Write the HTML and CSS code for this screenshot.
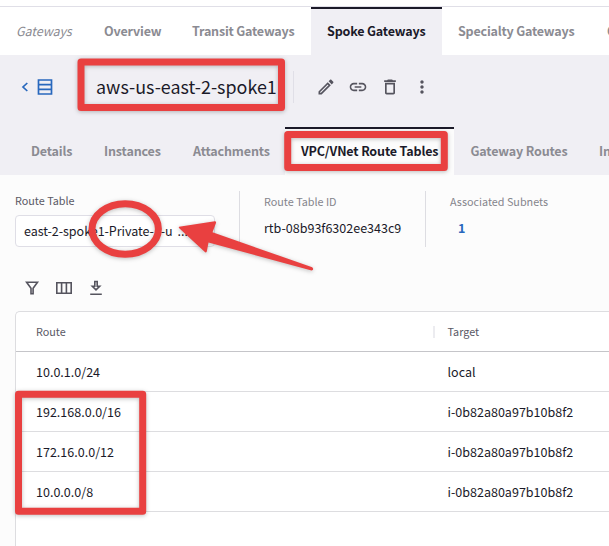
FILE: index.html
```html
<!DOCTYPE html>
<html lang="en">
<head>
<meta charset="utf-8">
<title>Spoke Gateways</title>
<link rel="stylesheet" href="styles.css">
</head>
<body>
<nav class="tabs main-tabs">
  <span class="tab section">Gateways</span>
  <a class="tab w88">Overview</a>
  <a class="tab w135">Transit Gateways</a>
  <a class="tab w131 active">Spoke Gateways</a>
  <a class="tab w149">Specialty Gateways</a>
  <a class="tab">C</a>
</nav>
<header class="title-bar">
  <svg class="back" viewBox="0 0 8 12"><path d="M6.300 2 2 6l4.300 4"/></svg>
  <svg class="list" viewBox="0 0 16 16"><path d="M1.500 1h13v14h-13zM1.500 5.700h13M1.500 10.300h13"/></svg>
  <h1>aws-us-east-2-spoke1</h1>
  <div class="actions">
    <svg viewBox="0 0 24 24"><path d="M14.060 9.020l.92.92L5.920 19H5v-.92l9.060-9.060M17.660 3c-.25 0-.51.1-.7.29l-1.830 1.830 3.750 3.750 1.830-1.830c.39-.39.39-1.020 0-1.410l-2.340-2.340c-.2-.2-.45-.29-.71-.29zm-3.600 3.190L3 17.250V21h3.750L17.810 9.940l-3.750-3.750z"/></svg>
    <svg viewBox="0 0 24 24"><path d="M3.900 12c0-1.710 1.390-3.100 3.100-3.100h4V7H7c-2.760 0-5 2.240-5 5s2.240 5 5 5h4v-1.900H7c-1.710 0-3.100-1.390-3.100-3.100zM8 13h8v-2H8v2zm9-6h-4v1.900h4c1.710 0 3.100 1.390 3.100 3.100s-1.390 3.100-3.100 3.100h-4V17h4c2.760 0 5-2.240 5-5s-2.240-5-5-5z"/></svg>
    <svg viewBox="0 0 24 24"><path d="M6 19c0 1.100.9 2 2 2h8c1.100 0 2-.9 2-2V7H6v12zM8 9h8v10H8V9zm7.500-5l-1-1h-5l-1 1H5v2h14V4h-3.500z"/></svg>
    <svg viewBox="0 0 24 24"><path d="M12 8c1.100 0 2-.9 2-2s-.9-2-2-2-2 .9-2 2 .9 2 2 2zm0 2c-1.100 0-2 .9-2 2s.9 2 2 2 2-.9 2-2-.9-2-2-2zm0 6c-1.100 0-2 .9-2 2s.9 2 2 2 2-.9 2-2-.9-2-2-2z"/></svg>
  </div>
</header>
<nav class="tabs sub-tabs">
  <a class="tab w73">Details</a>
  <a class="tab w89">Instances</a>
  <a class="tab w108">Attachments</a>
  <a class="tab w169 active">VPC/VNet Route Tables</a>
  <a class="tab w129">Gateway Routes</a>
  <a class="tab">In</a>
</nav>
<main>
  <section class="summary">
    <div class="picker">
      <label>Route Table</label>
      <div class="select"><span class="value">east-2-spoke1-Private-1-u</span><span>...</span></div>
    </div>
    <div class="fact">
      <div class="label">Route Table ID</div>
      <div class="data">rtb-08b93f6302ee343c9</div>
    </div>
    <div class="fact">
      <div class="label">Associated Subnets</div>
      <a class="data count">1</a>
    </div>
  </section>
  <div class="toolbar">
    <svg viewBox="0 0 16 16"><path d="M2.600 2.200h10.900L9.100 8.200v5.500H7V8.200z"/></svg>
    <svg viewBox="0 0 16 16"><path d="M.8 2.700h14.400v10.600H.8zM5.600 2.700v10.600M10.400 2.700v10.600"/></svg>
    <svg viewBox="0 0 16 16"><path d="M2.200 14.200h11.600M6.800 1.500h2.400v4.700h2.500L8 9.900 4.300 6.200h2.500z"/></svg>
  </div>
  <section class="grid">
    <div class="row head"><span>Route</span><span class="target">Target</span></div>
    <div class="row"><span>10.0.1.0/24</span><span>local</span></div>
    <div class="row"><span>192.168.0.0/16</span><span>i-0b82a80a97b10b8f2</span></div>
    <div class="row"><span>172.16.0.0/12</span><span>i-0b82a80a97b10b8f2</span></div>
    <div class="row"><span>10.0.0.0/8</span><span>i-0b82a80a97b10b8f2</span></div>
  </section>
</main>
<svg class="markup" viewBox="0 0 609 546">
  <rect x="81" y="62" width="200.500" height="45.500"/>
  <rect x="287.700" y="134.500" width="156.600" height="33"/>
  <rect x="18.500" y="394.200" width="124.200" height="117"/>
  <ellipse cx="125.200" cy="229" rx="33.200" ry="25.300"/>
  <path class="arrow" d="M179 226.800 214.800 221.200Q216.500 221.200 216 223L212.500 232.300 312.200 267.200Q314.500 269.500 311.500 270.500L208.500 242.500 206.800 251.500Q206 253.300 204.600 251.800L179.500 228.500Q178.300 227.500 179 226.800z"/>
</svg>
</body>
</html>
```
FILE: styles.css
```css
* { box-sizing: border-box; }
body {
  margin: 0;
  width: 609px;
  height: 546px;
  padding-top: 6px;
  overflow: hidden;
  position: relative;
  background: #fff;
  color: #1b1a29;
  font-family: "Noto Sans CJK JP", sans-serif;
  font-size: 12.540px;
  line-height: 18px;
}
svg { display: block; flex: none; }
.tabs { display: flex; height: 48px; overflow: hidden; white-space: nowrap; }
.tab {
  flex: none;
  padding: 0 16px;
  border-top: 2px solid transparent;
  line-height: 44px;
  color: #8b8b92;
  font-weight: 700;
  letter-spacing: -0.160px;
}
.main-tabs { height: 49px; border-top: 1px solid #e0dfe7; }
.section { width: 88px; font-weight: 400; font-style: italic; letter-spacing: -0.100px; }
.active { color: #1b1a29; border-top-color: #1b1a29; background: #f0eff4; }
.w88 { width: 88px; }
.w135 { width: 135px; letter-spacing: -0.200px; }
.w131 { width: 131px; letter-spacing: -0.180px; }
.w149 { width: 149px; letter-spacing: -0.200px; }
.w73 { width: 73px; }
.w89 { width: 89px; }
.w108 { width: 108px; }
.w169 { width: 169px; }
.w129 { width: 129px; padding-left: 16.500px; }
.title-bar {
  height: 72px;
  display: flex;
  align-items: center;
  padding: 0 0 8px 21px;
  background: #f0eff4;
}
.back, .list { fill: none; stroke: #2868bd; stroke-width: 1.700; }
.back { width: 8px; height: 12px; }
.list { width: 16px; height: 16px; margin-left: 8px; }
h1 {
  margin: 0 0 0 43px;
  width: 198px;
  height: 32px;
  border-right: 1px solid #e0dfe7;
  font-size: 17.900px;
  line-height: 30px;
  font-weight: 400;
  white-space: nowrap;
}
.actions { display: flex; gap: 12px; margin-left: 22px; fill: #55545e; }
.actions svg { width: 20px; height: 20px; }
.sub-tabs { padding-left: 15px; background: #f0eff4; }
.sub-tabs .active { background: #fcfcfc; }
main { height: 371px; padding: 16px 0 0 15px; background: #fcfcfc; }
.summary { display: flex; height: 56px; }
.picker { width: 224px; flex: none; }
.picker label, .label { display: block; font-size: 10.800px; line-height: 16px; }
.picker label { color: #5a5965; padding-top: 1px; }
.select {
  width: 200px;
  height: 32px;
  margin-top: 7px;
  padding: 0 7px 0 8px;
  display: flex;
  gap: 5px;
  border: 1px solid #dfdee6;
  border-radius: 4px;
  background: #fff;
  line-height: 30px;
}
.value { letter-spacing: -0.050px; }
.fact { width: 186px; flex: none; padding: 2px 0 0 24px; border-left: 1px solid #dddde2; }
.label { color: #85858c; }
.data { display: block; margin-top: 10px; }
.count { padding-left: 8px; color: #2868bd; font-weight: 700; }
.toolbar { display: flex; gap: 16px; margin: 33px 0 0 9px; }
.toolbar svg { width: 16px; height: 16px; fill: none; stroke: #55545e; stroke-width: 1.600; }
.grid {
  height: 250px;
  margin-top: 15px;
  border: 1px solid #dddde0;
  border-width: 1px 0 0 1px;
  border-radius: 5px 0 0;
  background: #fff;
}
.row {
  height: 40px;
  display: grid;
  grid-template-columns: 411.500px 1fr;
  padding-left: 20px;
  border-bottom: 1px solid #dddde0;
  line-height: 40px;
}
.head { border-color: #c5c5c9; font-size: 10.800px; line-height: 38px; color: #5a5965; }
.target { position: relative; }
.target::before {
  content: "";
  position: absolute;
  left: -14.500px;
  top: 14px;
  width: 2px;
  height: 12px;
  background: #ececf0;
}
.markup {
  position: absolute;
  inset: 0;
  width: 609px;
  height: 546px;
  fill: none;
  stroke: #e94040;
  stroke-width: 7;
  stroke-linejoin: round;
  filter: drop-shadow(0 1px 2px rgba(0, 0, 0, .25));
}
.markup .arrow { fill: #e94040; stroke: none; }
```
